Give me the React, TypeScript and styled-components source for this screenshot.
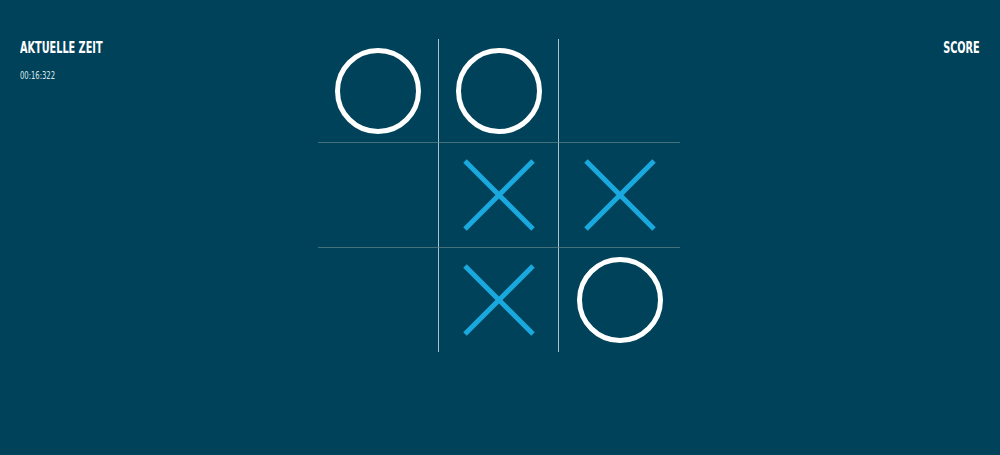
import React from "react";
import styled, { createGlobalStyle } from "styled-components";

const Global = createGlobalStyle`
  html, body { margin: 0; padding: 0; background: #00425a; }
  body { width: 1000px; height: 455px; overflow: hidden; }
`;

const Page = styled.div`
  display: grid;
  grid-template-columns: 1fr auto 1fr;
  padding: 39px 20px 0 20px;
  height: 455px;
  box-sizing: border-box;
  background: #00425a;
  font-family: "DejaVu Sans Condensed", "Liberation Sans", sans-serif;
`;

const Panel = styled.div<{ $right?: boolean }>`
  display: flex;
  flex-direction: column;
  align-items: ${(p) => (p.$right ? "flex-end" : "flex-start")};
`;

const Title = styled.div<{ $right?: boolean }>`
  color: #ffffff;
  font-weight: 700;
  font-size: 15px;
  line-height: 16px;
  margin-top: 1px;
  white-space: nowrap;
  transform: scaleX(0.72);
  transform-origin: ${(p) => (p.$right ? "right" : "left")} center;
`;

const Time = styled.div`
  margin-top: 14px;
  color: #dde7eb;
  font-size: 10px;
  line-height: 12px;
  white-space: nowrap;
  transform: scaleX(0.76);
  transform-origin: left center;
`;

const Board = styled.div`
  display: grid;
  grid-template-columns: 120px 120px 122px;
  grid-template-rows: 103px 105px 105px;
  margin-left: -1px;
  margin-right: 1px;
`;

const Cell = styled.div<{ $col: number; $row: number }>`
  display: flex;
  align-items: center;
  justify-content: center;
  box-sizing: border-box;
  border-left: ${(p) => (p.$col > 0 ? "1px solid #a9c3cb" : "none")};
  border-top: ${(p) => (p.$row > 0 ? "1px solid #46707a" : "none")};
`;

const Mark = styled.svg`
  display: block;
`;

const O = () => (
  <Mark width="86" height="86" viewBox="0 0 86 86">
    <circle cx="43" cy="43" r="40.5" fill="none" stroke="#ffffff" strokeWidth="5" />
  </Mark>
);

const X = () => (
  <Mark width="72" height="72" viewBox="0 0 72 72">
    <line x1="2" y1="2" x2="70" y2="70" stroke="#1aa9df" strokeWidth="5" />
    <line x1="70" y1="2" x2="2" y2="70" stroke="#1aa9df" strokeWidth="5" />
  </Mark>
);

const cells = ["O", "O", "", "", "X", "X", "", "X", "O"];

export default function App() {
  return (
    <>
      <Global />
      <Page>
        <Panel>
          <Title>AKTUELLE ZEIT</Title>
          <Time>00:16:322</Time>
        </Panel>
        <Board>
          {cells.map((c, i) => (
            <Cell key={i} $col={i % 3} $row={Math.floor(i / 3)}>
              {c === "O" ? <O /> : c === "X" ? <X /> : null}
            </Cell>
          ))}
        </Board>
        <Panel $right>
          <Title $right>SCORE</Title>
        </Panel>
      </Page>
    </>
  );
}
